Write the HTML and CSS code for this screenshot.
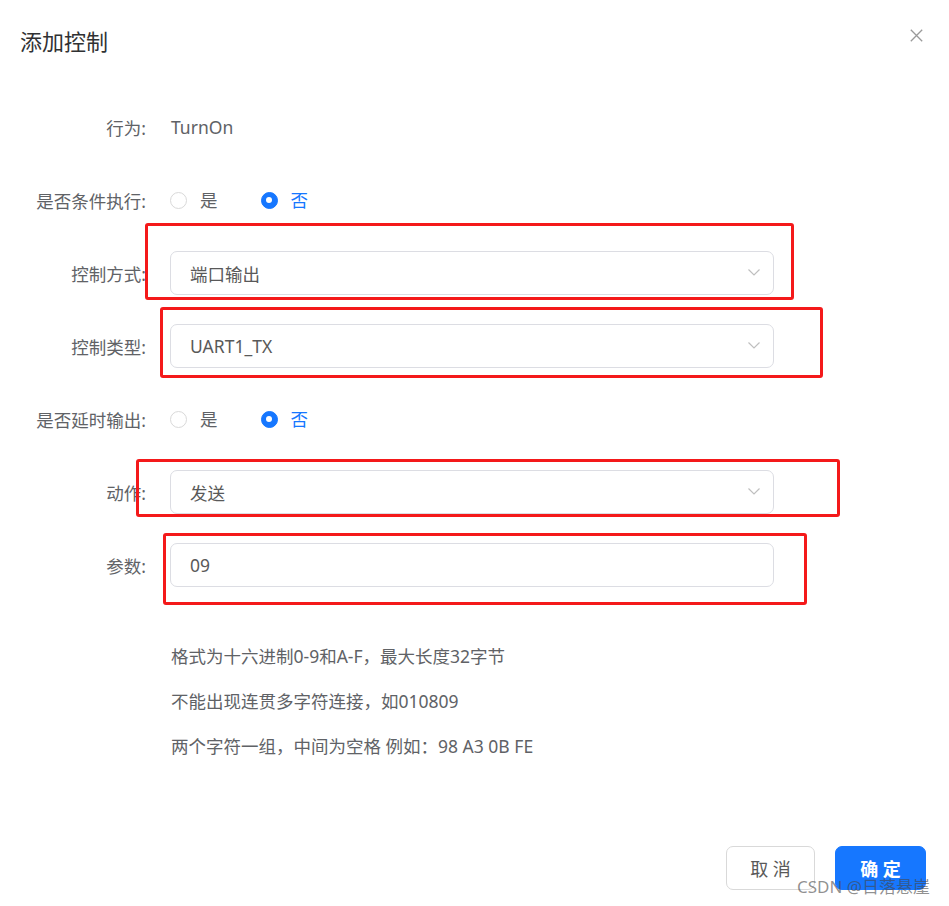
FILE: index.html
```html
<!DOCTYPE html>
<html lang="zh-CN">
<head>
    <meta charset="UTF-8">
    <meta name="viewport" content="width=device-width, initial-scale=1.0">
    <title>添加控制</title>
    <link rel="stylesheet" href="styles.css">
</head>
<body>
    <div class="dialog">
        <div class="dialog-header">
            <span class="dialog-title">添加控制</span>
            <button class="dialog-close" aria-label="close">
                <svg width="13" height="13" viewBox="0 0 13 13">
                    <path d="M0.8 0.8 L12.2 12.2 M12.2 0.8 L0.8 12.2" stroke="#9a9a9a" stroke-width="1.3" fill="none"/>
                </svg>
            </button>
        </div>

        <div class="form">
            <div class="form-item">
                <label class="form-label">行为:</label>
                <div class="form-value">TurnOn</div>
            </div>

            <div class="form-item">
                <label class="form-label">是否条件执行:</label>
                <div class="radio-group">
                    <span class="radio"><span class="radio-dot"></span><span class="radio-text">是</span></span>
                    <span class="radio checked"><span class="radio-dot"></span><span class="radio-text">否</span></span>
                </div>
            </div>

            <div class="form-item">
                <label class="form-label">控制方式:</label>
                <div class="select">
                    <span>端口输出</span>
                    <svg class="arrow" width="12" height="7" viewBox="0 0 12 7"><path d="M0.5 0.5 L6 6 L11.5 0.5" stroke="#bfbfbf" stroke-width="1.2" fill="none"/></svg>
                </div>
            </div>

            <div class="form-item">
                <label class="form-label">控制类型:</label>
                <div class="select">
                    <span>UART1_TX</span>
                    <svg class="arrow" width="12" height="7" viewBox="0 0 12 7"><path d="M0.5 0.5 L6 6 L11.5 0.5" stroke="#bfbfbf" stroke-width="1.2" fill="none"/></svg>
                </div>
            </div>

            <div class="form-item">
                <label class="form-label">是否延时输出:</label>
                <div class="radio-group">
                    <span class="radio"><span class="radio-dot"></span><span class="radio-text">是</span></span>
                    <span class="radio checked"><span class="radio-dot"></span><span class="radio-text">否</span></span>
                </div>
            </div>

            <div class="form-item">
                <label class="form-label">动作:</label>
                <div class="select">
                    <span>发送</span>
                    <svg class="arrow" width="12" height="7" viewBox="0 0 12 7"><path d="M0.5 0.5 L6 6 L11.5 0.5" stroke="#bfbfbf" stroke-width="1.2" fill="none"/></svg>
                </div>
            </div>

            <div class="form-item">
                <label class="form-label">参数:</label>
                <div class="select">
                    <span>09</span>
                </div>
            </div>

            <div class="help">
                <p>格式为十六进制0-9和A-F，最大长度32字节</p>
                <p>不能出现连贯多字符连接，如010809</p>
                <p>两个字符一组，中间为空格 例如：98 A3 0B FE</p>
            </div>
        </div>

        <div class="dialog-footer">
            <button class="btn">取 消</button>
            <button class="btn btn-primary">确 定</button>
        </div>

        <!-- red annotation boxes -->
        <div class="mark mark-1"></div>
        <div class="mark mark-2"></div>
        <div class="mark mark-3"></div>
        <div class="mark mark-4"></div>

        <div class="watermark">CSDN @日落悬崖</div>
    </div>
</body>
</html>
```

FILE: styles.css
```css
/* General */
body {
    margin: 0;
    font-family: "Noto Sans", "Noto Sans CJK SC", sans-serif;
    background: #fff;
    color: #606266;
}
.dialog {
    position: relative;
    width: 949px;
    height: 906px;
    padding: 29px 23px 16px 20px;
    box-sizing: border-box;
    display: flex;
    flex-direction: column;
}

/* Header */
.dialog-header {
    display: flex;
    justify-content: space-between;
    align-items: flex-start;
}
.dialog-title {
    font-size: 22px;
    line-height: 24px;
    color: #303133;
}
.dialog-close {
    border: none;
    background: none;
    padding: 0;
    margin-right: 3px;
    width: 13px;
    height: 13px;
    line-height: 0;
}

/* Form */
.form {
    margin-top: 52px;
}
.form-item {
    display: flex;
    align-items: center;
    height: 44px;
    margin-bottom: 29px;
    font-size: 17.5px;
}
.form-label {
    width: 150px;
    padding-right: 24px;
    box-sizing: border-box;
    text-align: right;
    color: #606266;
    white-space: nowrap;
}
.form-value {
    padding-left: 1px;
    color: #606266;
}

/* Radio */
.radio-group {
    display: flex;
    align-items: center;
}
.radio {
    display: flex;
    align-items: center;
    margin-right: 30px;
}
.radio-dot {
    width: 17px;
    height: 17px;
    border: 1px solid #d9d9d9;
    border-radius: 50%;
    box-sizing: border-box;
    position: relative;
}
.radio-text {
    padding: 0 13px;
    margin-top: -2px;
    color: #606266;
}
.radio.checked .radio-dot {
    background: #1677ff;
    border-color: #1677ff;
}
.radio.checked .radio-dot::after {
    content: "";
    position: absolute;
    left: 50%;
    top: 50%;
    width: 6px;
    height: 6px;
    margin: -3px 0 0 -3px;
    background: #fff;
    border-radius: 50%;
}
.radio.checked .radio-text {
    color: #1677ff;
}

/* Select / input */
.select {
    width: 604px;
    height: 44px;
    border: 1px solid #dcdde3;
    border-radius: 7px;
    box-sizing: border-box;
    display: flex;
    align-items: center;
    justify-content: space-between;
    padding: 0 13px 0 19px;
    color: #595959;
}
.arrow {
    margin-top: -2px;
}

/* Help text */
.help {
    margin-top: 47px;
    padding-left: 151px;
    font-size: 17.5px;
    line-height: 45px;
    color: #606266;
}
.help p {
    margin: 0;
}

/* Footer */
.dialog-footer {
    margin-top: auto;
    display: flex;
    justify-content: flex-end;
    gap: 20px;
}
.btn {
    height: 44px;
    width: 89px;
    border: 1px solid #d9d9d9;
    border-radius: 7px;
    background: #fff;
    color: #595959;
    font-family: inherit;
    font-size: 18px;
}
.btn-primary {
    width: 91px;
    background: #1677ff;
    border-color: #1677ff;
    color: #fff;
    font-weight: bold;
}

/* Annotation boxes */
.mark {
    position: absolute;
    border: 3px solid #f4191a;
    border-radius: 3px;
    box-sizing: border-box;
}
.mark-1 { left: 145px; top: 223px; width: 649px; height: 77px; }
.mark-2 { left: 160px; top: 307px; width: 663px; height: 71px; }
.mark-3 { left: 136px; top: 459px; width: 704px; height: 58px; }
.mark-4 { left: 163px; top: 533px; width: 644px; height: 72px; }

.watermark {
    position: absolute;
    left: 797px;
    top: 876px;
    font-size: 17px;
    line-height: 22px;
    color: rgba(70, 70, 70, 0.6);
    white-space: nowrap;
}
```
